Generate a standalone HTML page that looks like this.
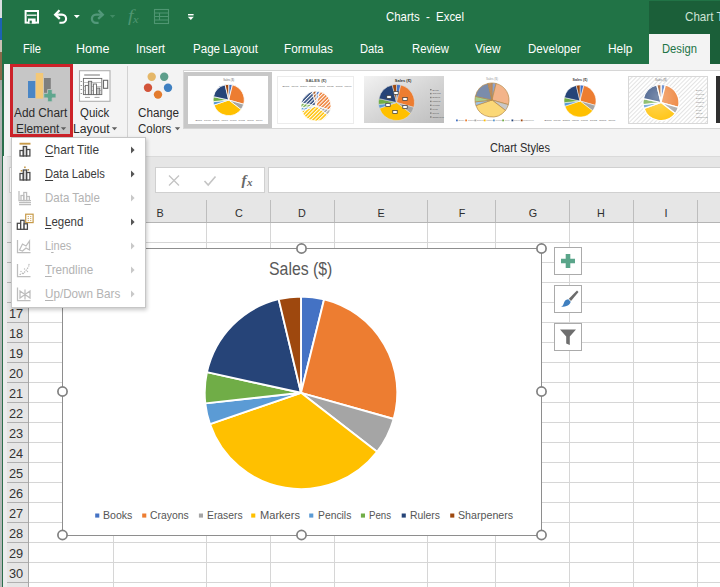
<!DOCTYPE html>
<html><head><meta charset="utf-8"><title>Charts - Excel</title>
<style>
html,body{margin:0;padding:0}
body{width:720px;height:587px;overflow:hidden;position:relative;background:#fff;font-family:"Liberation Sans", sans-serif}
.a{position:absolute;display:block}
.t{position:absolute;display:block;white-space:nowrap;line-height:20px;height:20px;transform-origin:0 50%}
u{text-decoration:underline;text-underline-offset:1.5px}
</style></head><body>
<div class="a" style="left:0;top:0;width:720px;height:64px;background:#217346"></div>
<div class="a" style="left:649px;top:1px;width:71px;height:63px;background:#1b5f39"></div>
<div class="a" style="left:649px;top:34px;width:61px;height:30px;background:#f3f3f3"></div>
<span class="t" style="left:386px;top:7.00px;font-size:13px;color:#fff;transform:scaleX(0.8778);">Charts&nbsp; - &nbsp;Excel</span>
<span class="t" style="left:684.5px;top:7.00px;font-size:13px;color:#cfe3d6;transform:scaleX(0.8929);white-space:nowrap">Chart Tools</span>
<span class="t" style="left:23px;top:38.50px;font-size:12.5px;color:#fff;transform:scaleX(0.8930);">File</span>
<span class="t" style="left:76px;top:38.50px;font-size:12.5px;color:#fff;transform:scaleX(1.0047);">Home</span>
<span class="t" style="left:136px;top:38.50px;font-size:12.5px;color:#fff;transform:scaleX(0.9275);">Insert</span>
<span class="t" style="left:192.5px;top:38.50px;font-size:12.5px;color:#fff;transform:scaleX(0.9259);">Page Layout</span>
<span class="t" style="left:284px;top:38.50px;font-size:12.5px;color:#fff;transform:scaleX(0.9406);">Formulas</span>
<span class="t" style="left:360px;top:38.50px;font-size:12.5px;color:#fff;transform:scaleX(0.8899);">Data</span>
<span class="t" style="left:411.5px;top:38.50px;font-size:12.5px;color:#fff;transform:scaleX(0.9024);">Review</span>
<span class="t" style="left:474.5px;top:38.50px;font-size:12.5px;color:#fff;transform:scaleX(0.9488);">View</span>
<span class="t" style="left:527.5px;top:38.50px;font-size:12.5px;color:#fff;transform:scaleX(0.9213);">Developer</span>
<span class="t" style="left:607.5px;top:38.50px;font-size:12.5px;color:#fff;transform:scaleX(0.9526);">Help</span>
<span class="t" style="left:661.5px;top:38.50px;font-size:12.5px;color:#217346;transform:scaleX(0.8992);">Design</span>
<svg class="a" style="left:0;top:0" width="220" height="34" viewBox="0 0 220 34">
<rect x="25.6" y="11" width="12.4" height="11.6" fill="none" stroke="#fff" stroke-width="2"/>
<path d="M27 15.2h9.5" stroke="#fff" stroke-width="1.3"/>
<rect x="28" y="18.5" width="7.6" height="5" fill="#fff"/>
<rect x="29.6" y="20.6" width="2.2" height="3" fill="#217346"/>
<g fill="none" stroke="#fff" stroke-width="2.3" stroke-linecap="butt" stroke-linejoin="miter">
<path d="M59.5 10.3l-4.3 4.4 4.6 4.2"/>
<path d="M55.5 14.6h6.5a4.1 4.1 0 0 1 0 8.2h-2.6" stroke-width="2.1"/>
</g>
<path d="M73.8 15h6l-3 3.2z" fill="#fff"/>
<g fill="none" stroke="#52987a" stroke-width="2.300">
<path d="M98.5 10.3l4.3 4.4-4.6 4.2"/>
<path d="M102.5 14.6h-6.5a4.1 4.1 0 0 0 0 8.2h2.6"/>
</g>
<path d="M109.8 15h5.6l-2.8 3z" fill="#3f8a63"/>
<g fill="none" stroke="#4f9672" stroke-width="1.1">
<rect x="154.5" y="9.5" width="14" height="14"/>
<path d="M154.5 13h14M154.5 16.500h14M154.5 20h14M159.500 13v7"/>
</g>
<rect x="188" y="14" width="5.6" height="1.4" fill="#fff"/>
<path d="M187.8 16.8h6l-3 3.2z" fill="#fff"/>
</svg>
<span class="t" style="left:127.5px;top:6.00px;font-size:17px;color:#4f9672;transform:scaleX(1.1617);font-family:'Liberation Serif',serif"><i>f</i></span>
<span class="t" style="left:133px;top:9.50px;font-size:10px;color:#4f9672;transform:scaleX(1.2500);font-family:'Liberation Serif',serif"><i>x</i></span>
<div class="a" style="left:0;top:64px;width:720px;height:92px;background:#f3f3f3"></div>
<div class="a" style="left:10.2px;top:63.800px;width:62.800px;height:73.400px;box-sizing:border-box;border:3px solid #cc2229;background:#c6c6c6"></div>
<svg class="a" style="left:20px;top:68px" width="44" height="38" viewBox="20 68 44 38">
<rect x="28" y="81" width="7.3" height="17" fill="#4a86c5"/>
<rect x="35.8" y="73" width="7.4" height="25.6" fill="#f3c877"/>
<rect x="44" y="78" width="6.8" height="15" fill="#7f7f7f"/>
<path d="M47.6 89.5h4.6v3.8h3.8v4.6h-3.8v3.9h-4.6v-3.9h-3.8v-4.6h3.8z" fill="#5fa68e" stroke="#c6c6c6" stroke-width="0.8"/>
</svg>
<span class="t" style="left:13.5px;top:102.80px;font-size:12.5px;color:#2b2b2b;transform:scaleX(0.9453);">Add Chart</span>
<span class="t" style="left:15.8px;top:118.70px;font-size:12.5px;color:#2b2b2b;transform:scaleX(0.9464);">Element</span>
<svg class="a" style="left:60px;top:126px" width="8" height="6"><path d="M0.8 1.200h5.400l-2.700 3.100z" fill="#606060"/></svg>
<svg class="a" style="left:76px;top:68px" width="40" height="38" viewBox="76 68 40 38">
<rect x="79.500" y="70.700" width="30.500" height="30.600" fill="#fff" stroke="#b0b0b0" stroke-width="1.1"/>
<path d="M84.200 75h15.700" stroke="#a8a8a8" stroke-width="1.600"/>
<g fill="none" stroke="#6a6a6a" stroke-width="0.9">
<rect x="83.400" y="78.400" width="18.400" height="16.200"/>
<path d="M83.400 82.500h18.400M83.400 86.500h18.400M83.400 90.500h18.400" stroke="#9a9a9a" stroke-width="0.6"/>
<rect x="85.300" y="85.400" width="3.100" height="9.200" fill="#fff"/>
<rect x="88.400" y="81.300" width="3.300" height="13.300" fill="#d0d0d0"/>
<rect x="93.400" y="84" width="3.100" height="10.600" fill="#fff"/>
<rect x="96.500" y="88.100" width="3.300" height="6.500" fill="#c4c4c4"/>
<rect x="103.500" y="80.300" width="4.200" height="8" stroke-width="1.100"/>
</g>
<path d="M80.600 81.500h1.500M80.600 85.500h1.500M80.600 89.500h1.500M80.600 93.500h1.500" stroke="#8a8a8a" stroke-width="0.900"/>
<path d="M85 97.400h5M94.500 97.400h5" stroke="#a0a0a0" stroke-width="1"/>
</svg>
<span class="t" style="left:80px;top:102.80px;font-size:12.5px;color:#2b2b2b;transform:scaleX(0.9138);">Quick</span>
<span class="t" style="left:73.1px;top:118.70px;font-size:12.5px;color:#2b2b2b;transform:scaleX(0.9752);">Layout</span>
<svg class="a" style="left:111px;top:126px" width="8" height="6"><path d="M0.8 1.200h5.400l-2.700 3.100z" fill="#606060"/></svg>
<div class="a" style="left:126.5px;top:66px;width:1px;height:76px;background:#d2d2d2"></div>
<svg class="a" style="left:140px;top:68px" width="40" height="36" viewBox="140 68 40 36">
<circle cx="151.7" cy="76.7" r="4.2" fill="#e5b768"/>
<circle cx="164.2" cy="76.7" r="4.2" fill="#5e9e8b"/>
<circle cx="148" cy="87.8" r="4.2" fill="#d2543a"/>
<circle cx="168" cy="87.8" r="4.2" fill="#3f80c1"/>
<circle cx="158" cy="94.6" r="4.2" fill="#e37b2d"/>
</svg>
<span class="t" style="left:138.3px;top:102.80px;font-size:12.5px;color:#2b2b2b;transform:scaleX(0.9339);">Change</span>
<span class="t" style="left:137.5px;top:118.70px;font-size:12.5px;color:#2b2b2b;transform:scaleX(0.9218);">Colors</span>
<svg class="a" style="left:173.500px;top:126px" width="8" height="6"><path d="M0.8 1.200h5.400l-2.700 3.100z" fill="#606060"/></svg>
<div class="a" style="left:183px;top:70px;width:540px;height:59px;box-sizing:border-box;background:#fff;border:1px solid #d6d6d6"></div>
<div class="a" style="left:184px;top:71.500px;width:88px;height:56.500px;box-sizing:border-box;border:4px solid #c8c8c8;background:#fff"></div>
<svg class="a" style="left:183px;top:70px;font-family:'Liberation Sans',sans-serif" width="537" height="59" viewBox="183 70 537 59"><defs><linearGradient id="gg" x1="0" y1="0" x2="1" y2="1"><stop offset="0" stop-color="#f2f2f2"/><stop offset="0.5" stop-color="#d6d6d6"/><stop offset="1" stop-color="#bdbdbd"/></linearGradient><radialGradient id="lt" cx="0.4" cy="0.35" r="0.7"><stop offset="0" stop-color="#fff" stop-opacity="0.38"/><stop offset="1" stop-color="#fff" stop-opacity="0.08"/></radialGradient><pattern id="hat" width="3" height="3" patternUnits="userSpaceOnUse" patternTransform="rotate(45)"><rect width="3" height="3" fill="#fff"/><rect width="0.8" height="3" fill="#dcdcdc"/></pattern><pattern id="st" width="2.6" height="2.6" patternUnits="userSpaceOnUse" patternTransform="rotate(45)"><rect width="1.1" height="2.6" fill="#fff"/></pattern></defs><path d="M228.7 100L228.70 84.40A15.6 15.6 0 0 1 232.45 84.86Z" fill="#4472c4" stroke="#fff" stroke-width="0.8" stroke-linejoin="round" opacity="1"/><path d="M228.7 100L232.45 84.86A15.6 15.6 0 0 1 243.71 104.25Z" fill="#ed7d31" stroke="#fff" stroke-width="0.8" stroke-linejoin="round" opacity="1"/><path d="M228.7 100L243.71 104.25A15.6 15.6 0 0 1 241.03 109.56Z" fill="#a5a5a5" stroke="#fff" stroke-width="0.8" stroke-linejoin="round" opacity="1"/><path d="M228.7 100L241.03 109.56A15.6 15.6 0 0 1 213.95 105.08Z" fill="#ffc000" stroke="#fff" stroke-width="0.8" stroke-linejoin="round" opacity="1"/><path d="M228.7 100L213.95 105.08A15.6 15.6 0 0 1 213.19 101.71Z" fill="#5b9bd5" stroke="#fff" stroke-width="0.8" stroke-linejoin="round" opacity="1"/><path d="M228.7 100L213.19 101.71A15.6 15.6 0 0 1 213.46 96.65Z" fill="#70ad47" stroke="#fff" stroke-width="0.8" stroke-linejoin="round" opacity="1"/><path d="M228.7 100L213.46 96.65A15.6 15.6 0 0 1 225.08 84.82Z" fill="#264478" stroke="#fff" stroke-width="0.8" stroke-linejoin="round" opacity="1"/><path d="M228.7 100L225.08 84.82A15.6 15.6 0 0 1 228.70 84.40Z" fill="#9e480e" stroke="#fff" stroke-width="0.8" stroke-linejoin="round" opacity="1"/><text x="228.7" y="81" font-size="2.7" fill="#666" text-anchor="middle" >Sales ($)</text><text x="195.5" y="121" font-size="2.3" fill="#5a5a5a" text-anchor="start" textLength="6.4" lengthAdjust="spacingAndGlyphs">Books</text><text x="204.1" y="121" font-size="2.3" fill="#5a5a5a" text-anchor="start" textLength="6.4" lengthAdjust="spacingAndGlyphs">Crayons</text><text x="212.8" y="121" font-size="2.3" fill="#5a5a5a" text-anchor="start" textLength="6.4" lengthAdjust="spacingAndGlyphs">Erasers</text><text x="221.4" y="121" font-size="2.3" fill="#5a5a5a" text-anchor="start" textLength="6.4" lengthAdjust="spacingAndGlyphs">Markers</text><text x="230.0" y="121" font-size="2.3" fill="#5a5a5a" text-anchor="start" textLength="6.4" lengthAdjust="spacingAndGlyphs">Pencils</text><text x="238.6" y="121" font-size="2.3" fill="#5a5a5a" text-anchor="start" textLength="6.4" lengthAdjust="spacingAndGlyphs">Pens</text><text x="247.2" y="121" font-size="2.3" fill="#5a5a5a" text-anchor="start" textLength="6.4" lengthAdjust="spacingAndGlyphs">Rulers</text><text x="255.9" y="121" font-size="2.3" fill="#5a5a5a" text-anchor="start" textLength="6.4" lengthAdjust="spacingAndGlyphs">Sharpeners</text><rect x="277.500" y="76.500" width="76" height="47" fill="#fff" stroke="#ececec"/><path d="M316 106L316.00 91.00A15 15 0 0 1 319.60 91.44Z" fill="#4472c4" stroke="#fff" stroke-width="0.8" stroke-linejoin="round" opacity="1"/><path d="M316 106L319.60 91.44A15 15 0 0 1 330.43 110.08Z" fill="#ed7d31" stroke="#fff" stroke-width="0.8" stroke-linejoin="round" opacity="1"/><path d="M316 106L330.43 110.08A15 15 0 0 1 327.85 115.19Z" fill="#a5a5a5" stroke="#fff" stroke-width="0.8" stroke-linejoin="round" opacity="1"/><path d="M316 106L327.85 115.19A15 15 0 0 1 301.82 110.88Z" fill="#ffc000" stroke="#fff" stroke-width="0.8" stroke-linejoin="round" opacity="1"/><path d="M316 106L301.82 110.88A15 15 0 0 1 301.09 107.65Z" fill="#5b9bd5" stroke="#fff" stroke-width="0.8" stroke-linejoin="round" opacity="1"/><path d="M316 106L301.09 107.65A15 15 0 0 1 301.35 102.78Z" fill="#70ad47" stroke="#fff" stroke-width="0.8" stroke-linejoin="round" opacity="1"/><path d="M316 106L301.35 102.78A15 15 0 0 1 312.52 91.41Z" fill="#264478" stroke="#fff" stroke-width="0.8" stroke-linejoin="round" opacity="1"/><path d="M316 106L312.52 91.41A15 15 0 0 1 316.00 91.00Z" fill="#9e480e" stroke="#fff" stroke-width="0.8" stroke-linejoin="round" opacity="1"/><circle cx="316" cy="106" r="15.4" fill="url(#st)"/><text x="316" y="81.8" font-size="4.3" fill="#555" text-anchor="middle" font-weight="bold" >SALES ($)</text><text x="282.5" y="87.3" font-size="2.5" fill="#555" text-anchor="start" textLength="6.7" lengthAdjust="spacingAndGlyphs">Books</text><text x="291.4" y="87.3" font-size="2.5" fill="#555" text-anchor="start" textLength="6.7" lengthAdjust="spacingAndGlyphs">Crayons</text><text x="300.2" y="87.3" font-size="2.5" fill="#555" text-anchor="start" textLength="6.7" lengthAdjust="spacingAndGlyphs">Erasers</text><text x="309.1" y="87.3" font-size="2.5" fill="#555" text-anchor="start" textLength="6.7" lengthAdjust="spacingAndGlyphs">Markers</text><text x="318.0" y="87.3" font-size="2.5" fill="#555" text-anchor="start" textLength="6.7" lengthAdjust="spacingAndGlyphs">Pencils</text><text x="326.9" y="87.3" font-size="2.5" fill="#555" text-anchor="start" textLength="6.7" lengthAdjust="spacingAndGlyphs">Pens</text><text x="335.8" y="87.3" font-size="2.5" fill="#555" text-anchor="start" textLength="6.7" lengthAdjust="spacingAndGlyphs">Rulers</text><text x="344.6" y="87.3" font-size="2.5" fill="#555" text-anchor="start" textLength="6.7" lengthAdjust="spacingAndGlyphs">Sharpeners</text><rect x="364" y="76" width="80" height="47" fill="url(#gg)"/><path d="M396.5 102.5L396.50 84.50A18 18 0 0 1 400.82 85.03Z" fill="#4472c4" stroke="#ddd" stroke-width="0.6" stroke-linejoin="round" opacity="1"/><path d="M396.5 102.5L400.82 85.03A18 18 0 0 1 413.82 107.40Z" fill="#ed7d31" stroke="#ddd" stroke-width="0.6" stroke-linejoin="round" opacity="1"/><path d="M396.5 102.5L413.82 107.40A18 18 0 0 1 410.72 113.53Z" fill="#a5a5a5" stroke="#ddd" stroke-width="0.6" stroke-linejoin="round" opacity="1"/><path d="M396.5 102.5L410.72 113.53A18 18 0 0 1 379.48 108.36Z" fill="#ffc000" stroke="#ddd" stroke-width="0.6" stroke-linejoin="round" opacity="1"/><path d="M396.5 102.5L379.48 108.36A18 18 0 0 1 378.61 104.48Z" fill="#5b9bd5" stroke="#ddd" stroke-width="0.6" stroke-linejoin="round" opacity="1"/><path d="M396.5 102.5L378.61 104.48A18 18 0 0 1 378.92 98.63Z" fill="#70ad47" stroke="#ddd" stroke-width="0.6" stroke-linejoin="round" opacity="1"/><path d="M396.5 102.5L378.92 98.63A18 18 0 0 1 392.33 84.99Z" fill="#264478" stroke="#ddd" stroke-width="0.6" stroke-linejoin="round" opacity="1"/><path d="M396.5 102.5L392.33 84.99A18 18 0 0 1 396.50 84.50Z" fill="#9e480e" stroke="#ddd" stroke-width="0.6" stroke-linejoin="round" opacity="1"/><text x="403" y="81.6" font-size="4" fill="#333" text-anchor="middle" font-weight="bold" >Sales ($)</text><rect x="430.1" y="89.0" width="1.4" height="1.4" fill="#777"/><text x="432.5" y="90.5" font-size="2.2" fill="#555" text-anchor="start" >Books</text><rect x="430.1" y="92.9" width="1.4" height="1.4" fill="#777"/><text x="432.5" y="94.4" font-size="2.2" fill="#555" text-anchor="start" >Crayons</text><rect x="430.1" y="96.8" width="1.4" height="1.4" fill="#777"/><text x="432.5" y="98.3" font-size="2.2" fill="#555" text-anchor="start" >Erasers</text><rect x="430.1" y="100.7" width="1.4" height="1.4" fill="#777"/><text x="432.5" y="102.2" font-size="2.2" fill="#555" text-anchor="start" >Markers</text><rect x="430.1" y="104.6" width="1.4" height="1.4" fill="#777"/><text x="432.5" y="106.1" font-size="2.2" fill="#555" text-anchor="start" >Pencils</text><rect x="430.1" y="108.5" width="1.4" height="1.4" fill="#777"/><text x="432.5" y="110.0" font-size="2.2" fill="#555" text-anchor="start" >Pens</text><rect x="430.1" y="112.4" width="1.4" height="1.4" fill="#777"/><text x="432.5" y="113.9" font-size="2.2" fill="#555" text-anchor="start" >Rulers</text><rect x="430.1" y="116.3" width="1.4" height="1.4" fill="#777"/><text x="432.5" y="117.8" font-size="2.2" fill="#555" text-anchor="start" >Sharpeners</text><rect x="393.8" y="91.5" width="4.400" height="3" fill="#fff" stroke="#333" stroke-width="0.7"/><rect x="386.8" y="95.5" width="4.400" height="3" fill="#fff" stroke="#333" stroke-width="0.7"/><rect x="385.8" y="103.5" width="4.400" height="3" fill="#fff" stroke="#333" stroke-width="0.7"/><rect x="392.8" y="110.5" width="4.400" height="3" fill="#fff" stroke="#333" stroke-width="0.7"/><rect x="402.8" y="105.5" width="4.400" height="3" fill="#fff" stroke="#333" stroke-width="0.7"/><rect x="402.8" y="97.5" width="4.400" height="3" fill="#fff" stroke="#333" stroke-width="0.7"/><path d="M492 100L492.00 83.00A17 17 0 0 1 496.08 83.50Z" fill="#8ea3d0" stroke="#b58a4a" stroke-width="0.7" stroke-linejoin="round" opacity="1"/><path d="M492 100L496.08 83.50A17 17 0 0 1 508.36 104.63Z" fill="#f3b48a" stroke="#b58a4a" stroke-width="0.7" stroke-linejoin="round" opacity="1"/><path d="M492 100L508.36 104.63A17 17 0 0 1 505.43 110.42Z" fill="#c8c8c8" stroke="#b58a4a" stroke-width="0.7" stroke-linejoin="round" opacity="1"/><path d="M492 100L505.43 110.42A17 17 0 0 1 475.93 105.53Z" fill="#fbd878" stroke="#b58a4a" stroke-width="0.7" stroke-linejoin="round" opacity="1"/><path d="M492 100L475.93 105.53A17 17 0 0 1 475.10 101.87Z" fill="#9cc2e5" stroke="#b58a4a" stroke-width="0.7" stroke-linejoin="round" opacity="1"/><path d="M492 100L475.10 101.87A17 17 0 0 1 475.40 96.35Z" fill="#a8cf8f" stroke="#b58a4a" stroke-width="0.7" stroke-linejoin="round" opacity="1"/><path d="M492 100L475.40 96.35A17 17 0 0 1 488.06 83.46Z" fill="#7b8cab" stroke="#b58a4a" stroke-width="0.7" stroke-linejoin="round" opacity="1"/><path d="M492 100L488.06 83.46A17 17 0 0 1 492.00 83.00Z" fill="#c08a63" stroke="#b58a4a" stroke-width="0.7" stroke-linejoin="round" opacity="1"/><text x="492" y="80.3" font-size="3" fill="#999" text-anchor="middle" >Sales ($)</text><rect x="456.0" y="119.5" width="1.8" height="1.8" fill="#4472c4"/><text x="458.4" y="121.3" font-size="2.1" fill="#888" text-anchor="start" >Books</text><rect x="465.2" y="119.5" width="1.8" height="1.8" fill="#ed7d31"/><text x="467.7" y="121.3" font-size="2.1" fill="#888" text-anchor="start" >Crayons</text><rect x="474.5" y="119.5" width="1.8" height="1.8" fill="#a5a5a5"/><text x="476.9" y="121.3" font-size="2.1" fill="#888" text-anchor="start" >Erasers</text><rect x="483.8" y="119.5" width="1.8" height="1.8" fill="#ffc000"/><text x="486.2" y="121.3" font-size="2.1" fill="#888" text-anchor="start" >Markers</text><rect x="493.0" y="119.5" width="1.8" height="1.8" fill="#5b9bd5"/><text x="495.4" y="121.3" font-size="2.1" fill="#888" text-anchor="start" >Pencils</text><rect x="502.2" y="119.5" width="1.8" height="1.8" fill="#70ad47"/><text x="504.7" y="121.3" font-size="2.1" fill="#888" text-anchor="start" >Pens</text><rect x="511.5" y="119.5" width="1.8" height="1.8" fill="#264478"/><text x="513.9" y="121.3" font-size="2.1" fill="#888" text-anchor="start" >Rulers</text><rect x="520.8" y="119.5" width="1.8" height="1.8" fill="#9e480e"/><text x="523.1" y="121.3" font-size="2.1" fill="#888" text-anchor="start" >Sharpeners</text><path d="M580 101L580.00 85.00A16 16 0 0 1 583.84 85.47Z" fill="#4472c4" stroke="#fff" stroke-width="0.5" stroke-linejoin="round" opacity="1"/><path d="M580 101L583.84 85.47A16 16 0 0 1 595.40 105.36Z" fill="#ed7d31" stroke="#fff" stroke-width="0.5" stroke-linejoin="round" opacity="1"/><path d="M580 101L595.40 105.36A16 16 0 0 1 592.64 110.81Z" fill="#a5a5a5" stroke="#fff" stroke-width="0.5" stroke-linejoin="round" opacity="1"/><path d="M580 101L592.64 110.81A16 16 0 0 1 564.87 106.21Z" fill="#ffc000" stroke="#fff" stroke-width="0.5" stroke-linejoin="round" opacity="1"/><path d="M580 101L564.87 106.21A16 16 0 0 1 564.10 102.76Z" fill="#5b9bd5" stroke="#fff" stroke-width="0.5" stroke-linejoin="round" opacity="1"/><path d="M580 101L564.10 102.76A16 16 0 0 1 564.37 97.56Z" fill="#70ad47" stroke="#fff" stroke-width="0.5" stroke-linejoin="round" opacity="1"/><path d="M580 101L564.37 97.56A16 16 0 0 1 576.29 85.44Z" fill="#264478" stroke="#fff" stroke-width="0.5" stroke-linejoin="round" opacity="1"/><path d="M580 101L576.29 85.44A16 16 0 0 1 580.00 85.00Z" fill="#9e480e" stroke="#fff" stroke-width="0.5" stroke-linejoin="round" opacity="1"/><text x="580" y="80.8" font-size="3.6" fill="#444" text-anchor="middle" font-weight="bold" >Sales ($)</text><text x="544.5" y="121.2" font-size="2.5" fill="#555" text-anchor="start" textLength="6.9" lengthAdjust="spacingAndGlyphs">Books</text><text x="553.6" y="121.2" font-size="2.5" fill="#555" text-anchor="start" textLength="6.9" lengthAdjust="spacingAndGlyphs">Crayons</text><text x="562.8" y="121.2" font-size="2.5" fill="#555" text-anchor="start" textLength="6.9" lengthAdjust="spacingAndGlyphs">Erasers</text><text x="571.9" y="121.2" font-size="2.5" fill="#555" text-anchor="start" textLength="6.9" lengthAdjust="spacingAndGlyphs">Markers</text><text x="581.0" y="121.2" font-size="2.5" fill="#555" text-anchor="start" textLength="6.9" lengthAdjust="spacingAndGlyphs">Pencils</text><text x="590.1" y="121.2" font-size="2.5" fill="#555" text-anchor="start" textLength="6.9" lengthAdjust="spacingAndGlyphs">Pens</text><text x="599.2" y="121.2" font-size="2.5" fill="#555" text-anchor="start" textLength="6.9" lengthAdjust="spacingAndGlyphs">Rulers</text><text x="608.4" y="121.2" font-size="2.5" fill="#555" text-anchor="start" textLength="6.9" lengthAdjust="spacingAndGlyphs">Sharpeners</text><rect x="628.500" y="76.500" width="79" height="47" fill="url(#hat)" stroke="#d8d8d8"/><path d="M661 102.5L661.00 84.50A18 18 0 0 1 665.32 85.03Z" fill="#4472c4" stroke="#fff" stroke-width="1.2" stroke-linejoin="round" opacity="1"/><path d="M661 102.5L665.32 85.03A18 18 0 0 1 678.32 107.40Z" fill="#ed7d31" stroke="#fff" stroke-width="1.2" stroke-linejoin="round" opacity="1"/><path d="M661 102.5L678.32 107.40A18 18 0 0 1 675.22 113.53Z" fill="#a5a5a5" stroke="#fff" stroke-width="1.2" stroke-linejoin="round" opacity="1"/><path d="M661 102.5L675.22 113.53A18 18 0 0 1 643.98 108.36Z" fill="#ffc000" stroke="#fff" stroke-width="1.2" stroke-linejoin="round" opacity="1"/><path d="M661 102.5L643.98 108.36A18 18 0 0 1 643.11 104.48Z" fill="#5b9bd5" stroke="#fff" stroke-width="1.2" stroke-linejoin="round" opacity="1"/><path d="M661 102.5L643.11 104.48A18 18 0 0 1 643.42 98.63Z" fill="#70ad47" stroke="#fff" stroke-width="1.2" stroke-linejoin="round" opacity="1"/><path d="M661 102.5L643.42 98.63A18 18 0 0 1 656.83 84.99Z" fill="#264478" stroke="#fff" stroke-width="1.2" stroke-linejoin="round" opacity="1"/><path d="M661 102.5L656.83 84.99A18 18 0 0 1 661.00 84.50Z" fill="#9e480e" stroke="#fff" stroke-width="1.2" stroke-linejoin="round" opacity="1"/><circle cx="661" cy="102.5" r="18.5" fill="url(#lt)"/><text x="661" y="80.5" font-size="3" fill="#777" text-anchor="middle" >Sales ($)</text><text x="696" y="91.0" font-size="2.2" fill="#777" text-anchor="start" >Books</text><text x="696" y="94.9" font-size="2.2" fill="#777" text-anchor="start" >Crayons</text><text x="696" y="98.8" font-size="2.2" fill="#777" text-anchor="start" >Erasers</text><text x="696" y="102.7" font-size="2.2" fill="#777" text-anchor="start" >Markers</text><text x="696" y="106.6" font-size="2.2" fill="#777" text-anchor="start" >Pencils</text><text x="696" y="110.5" font-size="2.2" fill="#777" text-anchor="start" >Pens</text><text x="696" y="114.4" font-size="2.2" fill="#777" text-anchor="start" >Rulers</text><text x="696" y="118.3" font-size="2.2" fill="#777" text-anchor="start" >Sharpeners</text><rect x="716" y="76" width="6" height="47" fill="#2f2f2f"/></svg>
<span class="t" style="left:490px;top:138.00px;font-size:12.5px;color:#2b2b2b;transform:scaleX(0.8811);">Chart Styles</span>
<div class="a" style="left:0;top:156px;width:720px;height:67px;background:#e6e6e6"></div>
<div class="a" style="left:0;top:155.500px;width:720px;height:1px;background:#dadada"></div>
<div class="a" style="left:8.5px;top:167px;width:136px;height:26px;box-sizing:border-box;background:#fff;border:1px solid #d0d0d0"></div>
<div class="a" style="left:155px;top:167px;width:110px;height:26px;box-sizing:border-box;background:#fff;border:1px solid #d0d0d0"></div>
<div class="a" style="left:268px;top:167px;width:460px;height:26px;box-sizing:border-box;background:#fff;border:1px solid #d0d0d0"></div>
<svg class="a" style="left:155px;top:167px" width="110" height="26" viewBox="155 167 110 26">
<path d="M169 175.500l10 10M179 175.500l-10 10" stroke="#c4c4c4" stroke-width="1.3" fill="none"/>
<path d="M204.500 181l3.700 4 7.300-8.500" stroke="#c4c4c4" stroke-width="1.6" fill="none"/>
</svg>
<span class="t" style="left:241.5px;top:170.00px;font-size:15px;color:#686868;font-family:'Liberation Serif',serif;font-weight:bold"><i>f</i></span>
<span class="t" style="left:246.5px;top:173.00px;font-size:10px;color:#686868;transform:scaleX(1.1000);font-family:'Liberation Serif',serif;font-weight:bold"><i>x</i></span>
<div class="a" style="left:0;top:222px;width:720px;height:1px;background:#b4b4b4"></div>
<div class="a" style="left:0;top:223px;width:720px;height:364px;background:#fff"></div>
<svg class="a" style="left:0;top:0" width="720" height="587" viewBox="0 0 720 587" shape-rendering="crispEdges"><path d="M113.5 200V222" stroke="#bdbdbd"/><path d="M113.5 223V587" stroke="#d6d6d6"/><path d="M206.5 200V222" stroke="#bdbdbd"/><path d="M206.5 223V587" stroke="#d6d6d6"/><path d="M270.5 200V222" stroke="#bdbdbd"/><path d="M270.5 223V587" stroke="#d6d6d6"/><path d="M334.5 200V222" stroke="#bdbdbd"/><path d="M334.5 223V587" stroke="#d6d6d6"/><path d="M427.5 200V222" stroke="#bdbdbd"/><path d="M427.5 223V587" stroke="#d6d6d6"/><path d="M495.5 200V222" stroke="#bdbdbd"/><path d="M495.5 223V587" stroke="#d6d6d6"/><path d="M569.5 200V222" stroke="#bdbdbd"/><path d="M569.5 223V587" stroke="#d6d6d6"/><path d="M633.5 200V222" stroke="#bdbdbd"/><path d="M633.5 223V587" stroke="#d6d6d6"/><path d="M697.5 200V222" stroke="#bdbdbd"/><path d="M697.5 223V587" stroke="#d6d6d6"/><path d="M28 242.5H720" stroke="#d6d6d6"/><path d="M28 262.5H720" stroke="#d6d6d6"/><path d="M28 282.5H720" stroke="#d6d6d6"/><path d="M28 302.5H720" stroke="#d6d6d6"/><path d="M28 322.5H720" stroke="#d6d6d6"/><path d="M28 342.5H720" stroke="#d6d6d6"/><path d="M28 362.5H720" stroke="#d6d6d6"/><path d="M28 382.5H720" stroke="#d6d6d6"/><path d="M28 402.5H720" stroke="#d6d6d6"/><path d="M28 422.5H720" stroke="#d6d6d6"/><path d="M28 442.5H720" stroke="#d6d6d6"/><path d="M28 462.5H720" stroke="#d6d6d6"/><path d="M28 482.5H720" stroke="#d6d6d6"/><path d="M28 502.5H720" stroke="#d6d6d6"/><path d="M28 522.5H720" stroke="#d6d6d6"/><path d="M28 542.5H720" stroke="#d6d6d6"/><path d="M28 562.5H720" stroke="#d6d6d6"/><path d="M28 582.5H720" stroke="#d6d6d6"/></svg>
<span class="t" style="left:155.4px;top:202.70px;font-size:11.5px;color:#2e2e2e;text-align:center;width:10px;transform:scaleX(0.94);transform-origin:50% 50%">B</span>
<span class="t" style="left:234.4px;top:202.70px;font-size:11.5px;color:#2e2e2e;text-align:center;width:10px;transform:scaleX(0.94);transform-origin:50% 50%">C</span>
<span class="t" style="left:297.4px;top:202.70px;font-size:11.5px;color:#2e2e2e;text-align:center;width:10px;transform:scaleX(0.94);transform-origin:50% 50%">D</span>
<span class="t" style="left:376.4px;top:202.70px;font-size:11.5px;color:#2e2e2e;text-align:center;width:10px;transform:scaleX(0.94);transform-origin:50% 50%">E</span>
<span class="t" style="left:457.09999999999997px;top:202.70px;font-size:11.5px;color:#2e2e2e;text-align:center;width:10px;transform:scaleX(0.94);transform-origin:50% 50%">F</span>
<span class="t" style="left:527.9px;top:202.70px;font-size:11.5px;color:#2e2e2e;text-align:center;width:10px;transform:scaleX(0.94);transform-origin:50% 50%">G</span>
<span class="t" style="left:596.4px;top:202.70px;font-size:11.5px;color:#2e2e2e;text-align:center;width:10px;transform:scaleX(0.94);transform-origin:50% 50%">H</span>
<span class="t" style="left:660.9px;top:202.70px;font-size:11.5px;color:#2e2e2e;text-align:center;width:10px;transform:scaleX(0.94);transform-origin:50% 50%">I</span>
<div class="a" style="left:3px;top:223px;width:25px;height:364px;background:#e6e6e6;border-right:1px solid #a6a6a6"></div>
<svg class="a" style="left:0;top:0" width="30" height="587" shape-rendering="crispEdges"><path d="M7 242.5H28" stroke="#b0b0b0"/><path d="M7 262.5H28" stroke="#b0b0b0"/><path d="M7 282.5H28" stroke="#b0b0b0"/><path d="M7 302.5H28" stroke="#b0b0b0"/><path d="M7 322.5H28" stroke="#b0b0b0"/><path d="M7 342.5H28" stroke="#b0b0b0"/><path d="M7 362.5H28" stroke="#b0b0b0"/><path d="M7 382.5H28" stroke="#b0b0b0"/><path d="M7 402.5H28" stroke="#b0b0b0"/><path d="M7 422.5H28" stroke="#b0b0b0"/><path d="M7 442.5H28" stroke="#b0b0b0"/><path d="M7 462.5H28" stroke="#b0b0b0"/><path d="M7 482.5H28" stroke="#b0b0b0"/><path d="M7 502.5H28" stroke="#b0b0b0"/><path d="M7 522.5H28" stroke="#b0b0b0"/><path d="M7 542.5H28" stroke="#b0b0b0"/><path d="M7 562.5H28" stroke="#b0b0b0"/><path d="M7 582.5H28" stroke="#b0b0b0"/></svg>
<span class="t" style="left:9.4px;top:304.20px;font-size:12px;color:#333;transform:scaleX(1.0629);">17</span>
<span class="t" style="left:9.4px;top:324.20px;font-size:12px;color:#333;transform:scaleX(1.0629);">18</span>
<span class="t" style="left:9.4px;top:344.20px;font-size:12px;color:#333;transform:scaleX(1.0629);">19</span>
<span class="t" style="left:9.4px;top:364.20px;font-size:12px;color:#333;transform:scaleX(1.0629);">20</span>
<span class="t" style="left:9.4px;top:384.20px;font-size:12px;color:#333;transform:scaleX(1.0629);">21</span>
<span class="t" style="left:9.4px;top:404.20px;font-size:12px;color:#333;transform:scaleX(1.0629);">22</span>
<span class="t" style="left:9.4px;top:424.20px;font-size:12px;color:#333;transform:scaleX(1.0629);">23</span>
<span class="t" style="left:9.4px;top:444.20px;font-size:12px;color:#333;transform:scaleX(1.0629);">24</span>
<span class="t" style="left:9.4px;top:464.20px;font-size:12px;color:#333;transform:scaleX(1.0629);">25</span>
<span class="t" style="left:9.4px;top:484.20px;font-size:12px;color:#333;transform:scaleX(1.0629);">26</span>
<span class="t" style="left:9.4px;top:504.20px;font-size:12px;color:#333;transform:scaleX(1.0629);">27</span>
<span class="t" style="left:9.4px;top:524.20px;font-size:12px;color:#333;transform:scaleX(1.0629);">28</span>
<span class="t" style="left:9.4px;top:544.20px;font-size:12px;color:#333;transform:scaleX(1.0629);">29</span>
<span class="t" style="left:9.4px;top:564.20px;font-size:12px;color:#333;transform:scaleX(1.0629);">30</span>
<div class="a" style="left:62px;top:248px;width:480px;height:287.500px;box-sizing:border-box;background:#fff;border:1.500px solid #8e8e8e"></div>
<svg class="a" style="left:50px;top:236px" width="540" height="312" viewBox="50 236 540 312"><path d="M301 392.8L301.00 296.50A96.3 96.3 0 0 1 324.13 299.32Z" fill="#4472c4" stroke="#fff" stroke-width="1.9" stroke-linejoin="round" opacity="1"/><path d="M301 392.8L324.13 299.32A96.3 96.3 0 0 1 393.66 419.02Z" fill="#ed7d31" stroke="#fff" stroke-width="1.9" stroke-linejoin="round" opacity="1"/><path d="M301 392.8L393.66 419.02A96.3 96.3 0 0 1 377.09 451.82Z" fill="#a5a5a5" stroke="#fff" stroke-width="1.9" stroke-linejoin="round" opacity="1"/><path d="M301 392.8L377.09 451.82A96.3 96.3 0 0 1 209.95 424.15Z" fill="#ffc000" stroke="#fff" stroke-width="1.9" stroke-linejoin="round" opacity="1"/><path d="M301 392.8L209.95 424.15A96.3 96.3 0 0 1 205.28 403.37Z" fill="#5b9bd5" stroke="#fff" stroke-width="1.9" stroke-linejoin="round" opacity="1"/><path d="M301 392.8L205.28 403.37A96.3 96.3 0 0 1 206.95 372.12Z" fill="#70ad47" stroke="#fff" stroke-width="1.9" stroke-linejoin="round" opacity="1"/><path d="M301 392.8L206.95 372.12A96.3 96.3 0 0 1 278.68 299.12Z" fill="#264478" stroke="#fff" stroke-width="1.9" stroke-linejoin="round" opacity="1"/><path d="M301 392.8L278.68 299.12A96.3 96.3 0 0 1 301.00 296.50Z" fill="#9e480e" stroke="#fff" stroke-width="1.9" stroke-linejoin="round" opacity="1"/><circle cx="62.5" cy="248.5" r="4.600" fill="#fff" stroke="#808080" stroke-width="1.700"/><circle cx="301.5" cy="248.5" r="4.600" fill="#fff" stroke="#808080" stroke-width="1.700"/><circle cx="541.5" cy="248.5" r="4.600" fill="#fff" stroke="#808080" stroke-width="1.700"/><circle cx="62.5" cy="391.5" r="4.600" fill="#fff" stroke="#808080" stroke-width="1.700"/><circle cx="541.5" cy="391.5" r="4.600" fill="#fff" stroke="#808080" stroke-width="1.700"/><circle cx="62.5" cy="535" r="4.600" fill="#fff" stroke="#808080" stroke-width="1.700"/><circle cx="301.5" cy="535" r="4.600" fill="#fff" stroke="#808080" stroke-width="1.700"/><circle cx="541.5" cy="535" r="4.600" fill="#fff" stroke="#808080" stroke-width="1.700"/><rect x="95.2" y="513.500" width="4.100" height="4.100" fill="#4472c4"/><rect x="142.2" y="513.500" width="4.100" height="4.100" fill="#ed7d31"/><rect x="198.89999999999998" y="513.500" width="4.100" height="4.100" fill="#a5a5a5"/><rect x="251.2" y="513.500" width="4.100" height="4.100" fill="#ffc000"/><rect x="309.2" y="513.500" width="4.100" height="4.100" fill="#5b9bd5"/><rect x="360.9" y="513.500" width="4.100" height="4.100" fill="#70ad47"/><rect x="401.7" y="513.500" width="4.100" height="4.100" fill="#264478"/><rect x="450.2" y="513.500" width="4.100" height="4.100" fill="#9e480e"/></svg>
<span class="t" style="left:269.3px;top:259.30px;font-size:18px;color:#595959;transform:scaleX(0.8802);">Sales ($)</span>
<span class="t" style="left:103.3px;top:504.90px;font-size:11.5px;color:#555;transform:scaleX(0.9196);">Books</span>
<span class="t" style="left:150px;top:504.90px;font-size:11.5px;color:#555;transform:scaleX(0.9036);">Crayons</span>
<span class="t" style="left:206.7px;top:504.90px;font-size:11.5px;color:#555;transform:scaleX(0.8984);">Erasers</span>
<span class="t" style="left:260px;top:504.90px;font-size:11.5px;color:#555;transform:scaleX(0.9631);">Markers</span>
<span class="t" style="left:318px;top:504.90px;font-size:11.5px;color:#555;transform:scaleX(0.8981);">Pencils</span>
<span class="t" style="left:369.3px;top:504.90px;font-size:11.5px;color:#555;transform:scaleX(0.8429);">Pens</span>
<span class="t" style="left:410px;top:504.90px;font-size:11.5px;color:#555;transform:scaleX(0.9027);">Rulers</span>
<span class="t" style="left:457.8px;top:504.90px;font-size:11.5px;color:#555;transform:scaleX(0.9282);">Sharpeners</span>
<div class="a" style="left:554px;top:247px;width:28px;height:28px;box-sizing:border-box;background:#fff;border:1px solid #ababab"></div>
<div class="a" style="left:554px;top:285px;width:28px;height:28px;box-sizing:border-box;background:#fff;border:1px solid #ababab"></div>
<div class="a" style="left:554px;top:322.5px;width:28px;height:28px;box-sizing:border-box;background:#fff;border:1px solid #ababab"></div>
<svg class="a" style="left:554px;top:247px" width="28" height="104" viewBox="554 247 28 104">
<path d="M565.700 254h4.600v4.700h4.700v4.600h-4.700v4.700h-4.600v-4.700h-4.700v-4.600h4.700z" fill="#5aa58a"/>
<path d="M577 290.500l1.500 1.500-7.500 9-2.200-2.200z" fill="#6b6b6b"/>
<path d="M568.300 299.300l2.400 2.400c-0.500 3-4 5-9.700 5 2.500-1 2.300-2.800 3.300-4.800 0.800-1.600 2.300-2.500 4-2.600z" fill="#3f7fbf"/>
<path d="M560 329.500h16l-6.200 7v8.500l-3.600-1.500v-7z" fill="#6e6e6e"/>
</svg>
<div class="a" style="left:11px;top:137px;width:135px;height:170.500px;box-sizing:border-box;background:#fff;border:1px solid #c6c6c6;box-shadow:1px 2px 4px rgba(0,0,0,0.22)"></div>
<span class="t" style="left:45.2px;top:140.00px;font-size:13px;color:#3b3b3b;transform:scaleX(0.9122);"><u>C</u>hart Title</span>
<span class="t" style="left:45.2px;top:164.00px;font-size:13px;color:#3b3b3b;transform:scaleX(0.8618);"><u>D</u>ata Labels</span>
<span class="t" style="left:45.2px;top:188.00px;font-size:13px;color:#b3b3b3;transform:scaleX(0.8848);">Data Ta<u>b</u>le</span>
<span class="t" style="left:45.2px;top:212.00px;font-size:13px;color:#3b3b3b;transform:scaleX(0.8827);"><u>L</u>egend</span>
<span class="t" style="left:45.2px;top:236.00px;font-size:13px;color:#b3b3b3;transform:scaleX(0.8458);">L<u>i</u>nes</span>
<span class="t" style="left:45.2px;top:260.00px;font-size:13px;color:#b3b3b3;transform:scaleX(0.8989);"><u>T</u>rendline</span>
<span class="t" style="left:45.2px;top:284.00px;font-size:13px;color:#b3b3b3;transform:scaleX(0.8984);"><u>U</u>p/Down Bars</span>
<svg class="a" style="left:11px;top:137px" width="135" height="170" viewBox="11 137 135 170"><path d="M131 146.5l3.600 3.500-3.600 3.500z" fill="#555"/><path d="M19.5 143.7h11" stroke="#c79a48" stroke-width="1.9"/><g fill="none" stroke="#484848" stroke-width="1.25"><rect x="20.0" y="150.5" width="3.300" height="5.500"/><rect x="23.3" y="146.5" width="3.300" height="9.500" fill="#d0d0d0"/><rect x="26.6" y="149.5" width="3.300" height="6.500"/></g><path d="M131 170.5l3.600 3.500-3.600 3.500z" fill="#555"/><g fill="#c79a48"><rect x="20.7" y="170" width="1.600" height="1.600"/><rect x="24.1" y="166.5" width="1.600" height="1.600"/><rect x="27.5" y="169" width="1.600" height="1.600"/></g><g fill="none" stroke="#484848" stroke-width="1.25"><rect x="20.0" y="173.5" width="3.300" height="6.500"/><rect x="23.3" y="170.0" width="3.300" height="10" fill="#d0d0d0"/><rect x="26.6" y="172.5" width="3.300" height="7.500"/></g><path d="M131 194.5l3.600 3.500-3.600 3.500z" fill="#c8c8c8"/><g fill="none" stroke="#bdbdbd" stroke-width="1.25"><path d="M19.0 191v9.500h12"/><rect x="21.0" y="195.5" width="2.800" height="5"/><rect x="23.8" y="192.5" width="2.800" height="8"/><rect x="26.6" y="196.5" width="2.800" height="4"/><path d="M19.0 202.5h12M19.0 204.5h12"/></g><path d="M131 218.5l3.600 3.500-3.600 3.500z" fill="#555"/><rect x="25.7" y="214.2" width="7.400" height="8.400" fill="#fff" stroke="#c79a48" stroke-width="1.200"/><path d="M27.7 216.6h3.600M27.7 218.6h3.600M27.7 220.6h3.600" stroke="#c79a48" stroke-width="0.9" stroke-dasharray="1.2 1.2"/><g fill="#fff" stroke="#484848" stroke-width="1.25"><rect x="17.3" y="223.3" width="3.400" height="6"/><rect x="20.7" y="220.3" width="3.400" height="9"/><rect x="24.1" y="223.8" width="3.300" height="5.500"/></g><path d="M131 242.5l3.600 3.500-3.600 3.500z" fill="#c8c8c8"/><g fill="none" stroke="#bdbdbd" stroke-width="1.25"><path d="M17.5 240v12.500h13"/><path d="M19.5 250l3-6 3.500 2 3.500-5v9l-3.500-2-3.500 3z"/></g><path d="M131 266.5l3.600 3.500-3.600 3.500z" fill="#c8c8c8"/><g fill="none" stroke="#bdbdbd" stroke-width="1.25"><path d="M17.5 264v12.500h13"/><path d="M19.5 274.5q6-1 9.500-9" stroke-dasharray="1.500 1"/></g><g fill="#bdbdbd"><circle cx="21.0" cy="271.5" r="0.7"/><circle cx="23.5" cy="273.5" r="0.7"/><circle cx="24.5" cy="269" r="0.7"/><circle cx="27.5" cy="271.5" r="0.7"/><circle cx="29.0" cy="264.5" r="0.7"/></g><path d="M131 290.5l3.600 3.500-3.600 3.500z" fill="#c8c8c8"/><g fill="none" stroke="#bdbdbd" stroke-width="1.25"><path d="M17.5 287.5v13h13"/><path d="M20.0 291l5 3.500-5 3.500zM30.0 291l-5 3.500 5 3.500z"/><path d="M25.0 289.5v10"/></g></svg>
<div class="a" style="left:2px;top:64px;width:1.600px;height:523px;background:#2a6e4b"></div>
<div class="a" style="left:3.300px;top:156px;width:4px;height:431px;background:#ececec"></div>
<div class="a" style="left:0;top:0;width:2.300px;height:587px;background:linear-gradient(#d9dde0 0,#d9dde0 18px,#1c62b5 18px,#1c62b5 40.500px,#c9c1b4 40.500px,#c9c1b4 51.500px,#8a6a4a 51.500px,#8a6a4a 79.500px,#a4a4a2 79.500px,#b0b2b2 110px,#b4b8b8 587px)"></div>
</body></html>
